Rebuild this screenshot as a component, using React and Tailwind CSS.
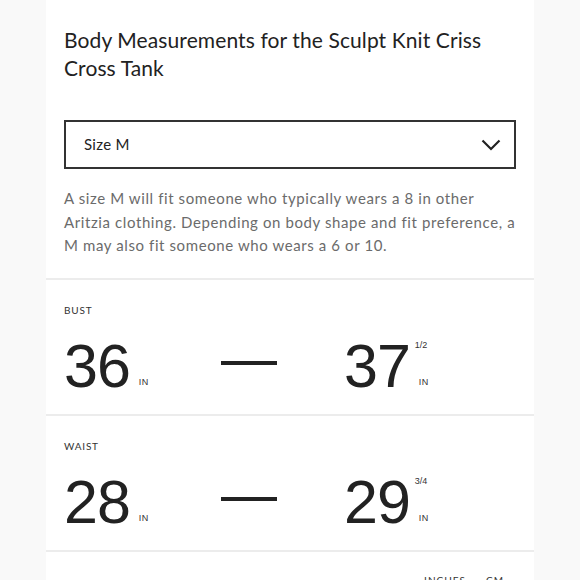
const rows = [
  { label: "BUST", min: "36", max: "37", frac: "1/2" },
  { label: "WAIST", min: "28", max: "29", frac: "3/4" },
];

function Value({ num, frac }) {
  return (
    <div className="flex items-stretch">
      <span className="text-[61px] leading-none text-[#222] font-['Liberation_Sans',Arial,sans-serif] tracking-[-1px]">
        {num}
      </span>
      <div className="flex flex-col justify-between pt-[5px] pb-[10px] pl-[5px] w-[26px] font-['Liberation_Sans',Arial,sans-serif] text-[#333]">
        <span className="text-[9px] leading-none">{frac || "\u00a0"}</span>
        <span className="text-[9px] leading-none tracking-[0.05em] pl-[4px]">IN</span>
      </div>
    </div>
  );
}

function MeasureRow({ label, min, max, frac }) {
  return (
    <div className="border-t-2 border-[#ececec] px-[18px] pt-[24px] pb-[17px]">
      <p className="text-[10px] leading-[12px] tracking-[0.08em] text-[#333] font-['Lato',sans-serif]">
        {label}
      </p>
      <div className="flex items-start mt-[20px]">
        <div className="w-[157px]">
          <Value num={min} />
        </div>
        <div className="w-[56px] h-[4px] bg-[#222] mt-[25px]" />
        <div className="ml-[67px]">
          <Value num={max} frac={frac} />
        </div>
      </div>
    </div>
  );
}

export default function App() {
  return (
    <div className="min-h-screen bg-[#f9f9f9] flex justify-center font-['Lato',sans-serif]">
      <div className="w-[488px] bg-white">
        <div className="px-[18px] pt-[26px] pb-[20px]">
          <h1 className="text-[21px] leading-[28px] text-[#222] tracking-[0.005em]">
            Body Measurements for the Sculpt Knit Criss
            <br />
            Cross Tank
          </h1>
          <button className="mt-[38px] w-full h-[49px] border-2 border-[#333] flex items-center justify-between pl-[18px] pr-[13px] text-[15px] text-[#222]">
            <span className="tracking-[0.02em]">Size M</span>
            <svg width="20" height="12" viewBox="0 0 20 12" fill="none">
              <path d="M1.5 1.5 L10 10 L18.5 1.5" stroke="#222" strokeWidth="2.2" />
            </svg>
          </button>
          <p className="mt-[18px] text-[15px] leading-[23.5px] text-[#6b6b6b] tracking-[0.04em] whitespace-nowrap">
            A size M will fit someone who typically wears a 8 in other
            <br />
            Aritzia clothing. Depending on body shape and fit preference, a
            <br />
            M may also fit someone who wears a 6 or 10.
          </p>
        </div>
        {rows.map((r) => (
          <MeasureRow key={r.label} {...r} />
        ))}
        <div className="border-t-2 border-[#ececec] flex justify-end gap-[20px] pr-[30px] pt-[21px] pb-[10px] text-[10px] tracking-[0.1em] text-[#333]">
          <span>INCHES</span>
          <span>CM</span>
        </div>
      </div>
    </div>
  );
}
